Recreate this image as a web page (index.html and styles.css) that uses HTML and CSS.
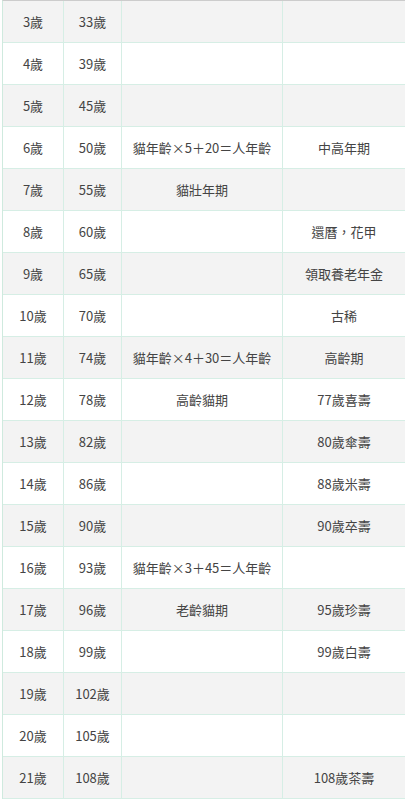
FILE: index.html
```html
<!DOCTYPE html>
<html lang="zh-Hant">
<head>
<meta charset="utf-8">
<link rel="stylesheet" href="styles.css">
</head>
<body>
<div class="table">
  <div class="row odd"><div class="cell">3歲</div><div class="cell">33歲</div><div class="cell"></div><div class="cell"></div></div>
  <div class="row"><div class="cell">4歲</div><div class="cell">39歲</div><div class="cell"></div><div class="cell"></div></div>
  <div class="row odd"><div class="cell">5歲</div><div class="cell">45歲</div><div class="cell"></div><div class="cell"></div></div>
  <div class="row"><div class="cell">6歲</div><div class="cell">50歲</div><div class="cell">貓年齡×5＋20＝人年齡</div><div class="cell">中高年期</div></div>
  <div class="row odd"><div class="cell">7歲</div><div class="cell">55歲</div><div class="cell">貓壯年期</div><div class="cell"></div></div>
  <div class="row"><div class="cell">8歲</div><div class="cell">60歲</div><div class="cell"></div><div class="cell">還曆，花甲</div></div>
  <div class="row odd"><div class="cell">9歲</div><div class="cell">65歲</div><div class="cell"></div><div class="cell">領取養老年金</div></div>
  <div class="row"><div class="cell">10歲</div><div class="cell">70歲</div><div class="cell"></div><div class="cell">古稀</div></div>
  <div class="row odd"><div class="cell">11歲</div><div class="cell">74歲</div><div class="cell">貓年齡×4＋30＝人年齡</div><div class="cell">高齡期</div></div>
  <div class="row"><div class="cell">12歲</div><div class="cell">78歲</div><div class="cell">高齡貓期</div><div class="cell">77歲喜壽</div></div>
  <div class="row odd"><div class="cell">13歲</div><div class="cell">82歲</div><div class="cell"></div><div class="cell">80歲傘壽</div></div>
  <div class="row"><div class="cell">14歲</div><div class="cell">86歲</div><div class="cell"></div><div class="cell">88歲米壽</div></div>
  <div class="row odd"><div class="cell">15歲</div><div class="cell">90歲</div><div class="cell"></div><div class="cell">90歲卒壽</div></div>
  <div class="row"><div class="cell">16歲</div><div class="cell">93歲</div><div class="cell">貓年齡×3＋45＝人年齡</div><div class="cell"></div></div>
  <div class="row odd"><div class="cell">17歲</div><div class="cell">96歲</div><div class="cell">老齡貓期</div><div class="cell">95歲珍壽</div></div>
  <div class="row"><div class="cell">18歲</div><div class="cell">99歲</div><div class="cell"></div><div class="cell">99歲白壽</div></div>
  <div class="row odd"><div class="cell">19歲</div><div class="cell">102歲</div><div class="cell"></div><div class="cell"></div></div>
  <div class="row"><div class="cell">20歲</div><div class="cell">105歲</div><div class="cell"></div><div class="cell"></div></div>
  <div class="row odd"><div class="cell">21歲</div><div class="cell">108歲</div><div class="cell"></div><div class="cell">108歲茶壽</div></div>
</div>
</body>
</html>
```
FILE: styles.css
```css
html, body {
  margin: 0;
  padding: 0;
  background: #ffffff;
}
body {
  font-family: "Noto Sans CJK TC", "Noto Sans", sans-serif;
  font-size: 13px;
  color: #444444;
}
.table {
  margin-left: 2px;
  width: 403px;
  border-top: 1px solid #cccccc;
  border-left: 1px solid #cfeade;
}
.row {
  display: grid;
  grid-template-columns: 61px 58px 161px 122px;
  height: 42px;
  border-bottom: 1px solid #d6eee5;
  box-sizing: border-box;
  background: #ffffff;
}
.row.odd {
  background: #f3f3f3;
}
.cell {
  box-sizing: border-box;
  border-right: 1px solid #d6eee5;
  display: flex;
  align-items: center;
  justify-content: center;
  white-space: nowrap;
}
.cell:last-child {
  border-right: none;
}
```
